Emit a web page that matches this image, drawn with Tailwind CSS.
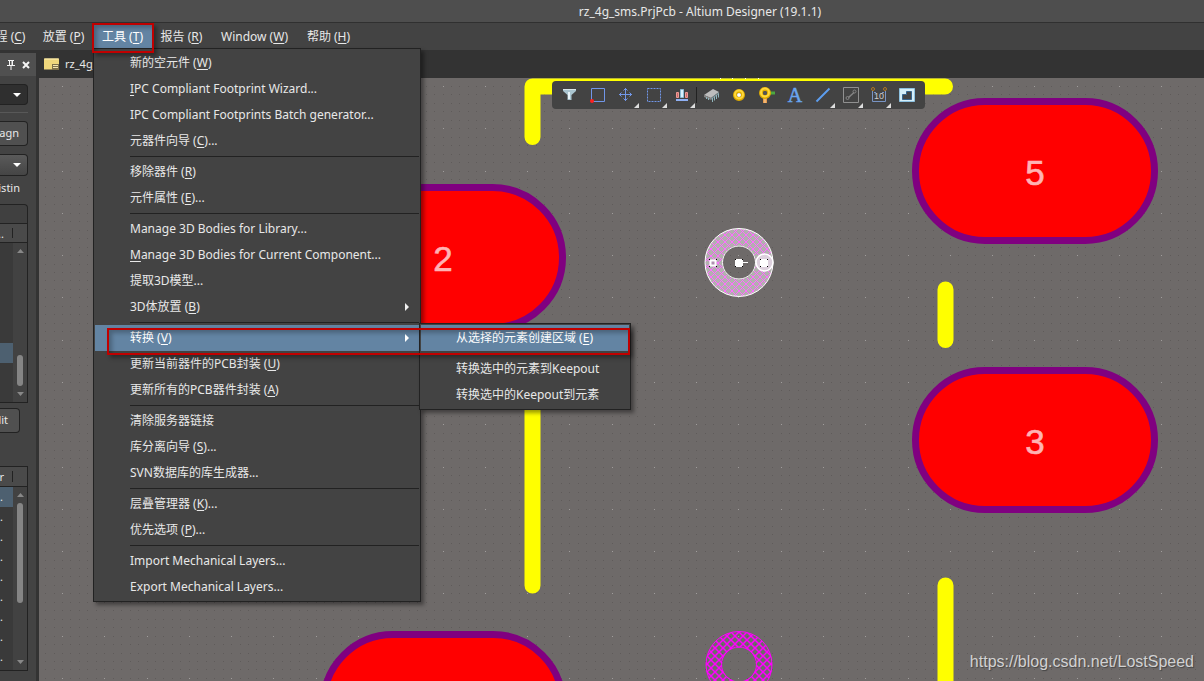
<!DOCTYPE html>
<html lang="zh-CN">
<head>
<meta charset="utf-8">
<title>rz_4g_sms.PrjPcb - Altium Designer (19.1.1)</title>
<script src="https://cdn.jsdelivr.net/npm/@tailwindcss/browser@4"></script>
</head>
<body class="relative flex h-screen flex-col overflow-hidden bg-[#333333] font-['Noto_Sans','Noto_Sans_CJK_SC',sans-serif] text-xs text-[#e8e8e8]">

<header class="h-[23px] shrink-0 border-b border-[#303030] bg-[#4e4e4e] pl-[196px] text-center leading-6">rz_4g_sms.PrjPcb - Altium Designer (19.1.1)</header>

<nav class="-ml-[25px] flex h-[27px] shrink-0 bg-[#434343] [&_u]:underline-offset-2">
  <button class="w-[59px] whitespace-nowrap">工程 (<u>C</u>)</button>
  <button class="w-[59px] whitespace-nowrap">放置 (<u>P</u>)</button>
  <div class="relative w-[59px]">
    <button class="h-[25px] w-full whitespace-nowrap bg-[#6384a3] pt-0.5 text-white">工具 (<u>T</u>)</button>
    <div class="pointer-events-none absolute -left-px top-0 z-30 h-[30px] w-[62px] border-2 border-[#c00000] shadow-[3px_3px_4px_rgba(0,0,0,0.35),inset_3px_3px_4px_rgba(0,0,0,0.25)]"></div>

    <div role="menu" class="absolute left-0 top-[25px] z-20 w-[328px] border border-[#222222] bg-[#434343] p-px shadow-[3px_3px_4px_rgba(0,0,0,0.4)] [&_button]:block [&_button]:h-[26px] [&_button]:w-full [&_button]:whitespace-nowrap [&_button]:pl-[35px] [&_button]:text-left [&_hr]:my-0.5 [&_hr]:ml-[35px] [&_hr]:border-[#222222]">
      <button role="menuitem">新的空元件 (<u>W</u>)</button>
      <button role="menuitem"><u>I</u>PC Compliant Footprint Wizard...</button>
      <button role="menuitem">IPC Compliant Footprints Batch generator...</button>
      <button role="menuitem">元器件向导 (<u>C</u>)...</button>
      <hr>
      <button role="menuitem">移除器件 (<u>R</u>)</button>
      <button role="menuitem">元件属性 (<u>E</u>)...</button>
      <hr>
      <button role="menuitem">Manage 3D Bodies for Library...</button>
      <button role="menuitem"><u>M</u>anage 3D Bodies for Current Component...</button>
      <button role="menuitem">提取3D模型...</button>
      <button role="menuitem" aria-haspopup="true"><span class="flex items-center justify-between pr-2.5"><span>3D体放置 (<u>B</u>)</span><svg class="h-2 w-1" viewBox="0 0 4 8"><path d="M0 0L4 4L0 8Z" fill="#f0f0f0"/></svg></span></button>
      <hr>
      <div class="relative">
        <button role="menuitem" aria-haspopup="true" aria-expanded="true" class="bg-[#6384a3] text-white"><span class="flex items-center justify-between pr-2.5"><span>转换 (<u>V</u>)</span><svg class="h-2 w-1" viewBox="0 0 4 8"><path d="M0 0L4 4L0 8Z" fill="#ffffff"/></svg></span></button>
        <div role="menu" class="absolute -top-0.5 left-[324px] w-[212px] border border-[#222222] bg-[#434343] p-px shadow-[3px_3px_4px_rgba(0,0,0,0.4)]">
          <button role="menuitem" class="bg-[#6384a3] text-white">从选择的元素创建区域 (<u>E</u>)</button>
          <hr>
          <button role="menuitem">转换选中的元素到Keepout</button>
          <button role="menuitem">转换选中的Keepout到元素</button>
        </div>
        <div class="pointer-events-none absolute left-3 top-[3px] h-[27px] w-[523px] border-2 border-[#c00000] shadow-[3px_3px_4px_rgba(0,0,0,0.35),inset_3px_3px_4px_rgba(0,0,0,0.25)]"></div>
      </div>
      <button role="menuitem">更新当前器件的PCB封装 (<u>U</u>)</button>
      <button role="menuitem">更新所有的PCB器件封装 (<u>A</u>)</button>
      <hr>
      <button role="menuitem">清除服务器链接</button>
      <button role="menuitem">库分离向导 (<u>S</u>)...</button>
      <button role="menuitem">SVN数据库的库生成器...</button>
      <hr>
      <button role="menuitem">层叠管理器 (<u>K</u>)...</button>
      <button role="menuitem">优先选项 (<u>P</u>)...</button>
      <hr>
      <button role="menuitem">Import Mechanical Layers...</button>
      <button role="menuitem">Export Mechanical Layers...</button>
    </div>
  </div>
  <button class="w-[59px] whitespace-nowrap">报告 (<u>R</u>)</button>
  <button class="w-[87px] whitespace-nowrap">Window (<u>W</u>)</button>
  <button class="w-[61px] whitespace-nowrap">帮助 (<u>H</u>)</button>
</nav>

<main class="flex min-h-0 flex-1">
  <aside class="mt-[3px] w-9 shrink-0 overflow-hidden bg-[#434343] text-[11px]">
    <div class="flex h-[23px] items-center justify-end gap-1.5 bg-[#505050] pr-1.5">
      <button aria-label="固定"><svg class="h-3 w-2.5" viewBox="0 0 10 12"><path d="M2 1.500H8M3.500 1V6.500M6.500 1V6.500M1 6.500H9M5 7V11" stroke="#f5f5f5" fill="none"/><path d="M5.500 1.500H7V6.500H5.500Z" fill="#f5f5f5"/></svg></button>
      <button aria-label="关闭"><svg class="h-2 w-2" viewBox="0 0 8 8"><path d="M1 1L7 7M7 1L1 7" stroke="#f5f5f5" stroke-width="2"/></svg></button>
    </div>
    <div class="pr-2">
      <button aria-label="筛选" class="mt-2 flex h-[21px] w-full items-center justify-end rounded-r border border-l-0 border-[#222222] bg-[#2f2f2f] pr-1.5"><svg class="h-1 w-2" viewBox="0 0 8 4"><path d="M0 0H8L4 4Z" fill="#ffffff"/></svg></button>
      <div class="mt-[7px] h-px bg-[#585858]"></div>
      <button class="mt-2 flex h-[25px] w-full items-center justify-end rounded-r border border-l-0 border-[#222222] bg-[#505050] pr-2">Magn</button>
      <button aria-label="模式" class="mt-2 flex h-[22px] w-full items-center justify-end rounded-r border border-l-0 border-[#222222] bg-linear-to-b from-[#5a5a5a] to-[#454545] pr-1.5"><svg class="h-1 w-2" viewBox="0 0 8 4"><path d="M0 0H8L4 4Z" fill="#ffffff"/></svg></button>
      <div class="mb-1 flex h-6 items-center justify-end pr-2">existin</div>
      <div class="h-[19px] rounded-tr border border-b-0 border-l-0 border-[#222222] bg-[#404040]"></div>
      <div class="flex h-5 border-y border-r border-[#222222] bg-[#4a4a4a]"><span class="my-1 flex w-[13px] justify-end border-r border-[#222222] pr-2 leading-3">...</span></div>
      <div class="flex h-[160px] border-b border-r border-[#222222] bg-[#3a3a3a]">
        <div class="w-[13px] pt-[100px]"><div class="h-5 bg-[#4d6070]"></div></div>
        <div class="flex flex-1 flex-col items-center bg-[#424242] py-1.5">
          <svg class="h-1 w-[7px]" viewBox="0 0 7 4"><path d="M0 4H7L3.500 0Z" fill="#888888"/></svg>
          <div class="mt-[102px] h-8 w-1.5 rounded-full bg-[#858585]"></div>
          <svg class="mt-1.5 h-1 w-[7px]" viewBox="0 0 7 4"><path d="M0 0H7L3.500 4Z" fill="#888888"/></svg>
        </div>
      </div>
      <button class="mt-[5px] flex h-[25px] w-5 items-center justify-end rounded-r border border-l-0 border-[#222222] bg-[#505050] pr-[11px]">Edit</button>
      <div class="mt-[33px] flex h-[21px] border-y border-r border-[#222222] bg-[#4a4a4a]"><span class="my-1 flex w-[13px] justify-end border-r border-[#222222] pr-2 leading-3">er</span></div>
      <div class="flex h-[184px] border-b border-r border-[#222222] bg-[#3a3a3a]">
        <div class="flex w-[13px] flex-col overflow-hidden [&>span]:flex [&>span]:h-5 [&>span]:shrink-0 [&>span]:items-center [&>span]:justify-end [&>span]:pr-2.5">
          <span class="bg-[#4d6070]">...</span><span>...</span><span>...</span><span>...</span><span>...</span><span>...</span><span>...</span><span>...</span><span>...</span>
        </div>
        <div class="flex flex-1 flex-col items-center bg-[#424242] py-1.5">
          <svg class="h-1 w-[7px]" viewBox="0 0 7 4"><path d="M0 4H7L3.500 0Z" fill="#888888"/></svg>
          <div class="mt-1.5 h-[100px] w-1.5 rounded-full bg-[#858585]"></div>
          <svg class="mt-auto h-1 w-[7px]" viewBox="0 0 7 4"><path d="M0 0H7L3.500 4Z" fill="#888888"/></svg>
        </div>
      </div>
    </div>
  </aside>

  <section class="ml-[3px] flex min-w-0 flex-1 flex-col">
    <div class="flex h-7 shrink-0 items-center pl-[5px]">
      <button class="flex items-center gap-1.5 text-[11px]">
        <svg class="h-3 w-[15px]" viewBox="0 0 15 12"><path d="M0 0.500H15V11.500H0Z" fill="#efd77c"/><path d="M0.500 1H14.500" stroke="#fff0b5"/><path d="M8 6H15V12H8Z" fill="#7d704a"/><path d="M9 7.500H14M9 9.500H14" stroke="#f5e6ae"/></svg>
        rz_4g_sms.PcbLib
      </button>
    </div>
    <div class="relative min-h-0 flex-1 overflow-hidden bg-[#6e6a69]">
      <svg class="absolute left-0 top-0" width="1165" height="603" viewBox="39 78 1165 603" font-family="Liberation Sans, sans-serif">
        <defs>
          <pattern id="hatchSel" x="739" y="263" width="7" height="7" patternUnits="userSpaceOnUse"><rect width="7" height="7" fill="#b3b0b0"/><path d="M-1 8L8 -1M-1 -1L8 8" stroke="#ff6cff" stroke-width="1"/></pattern>
          <pattern id="hatch" x="739" y="664" width="8" height="8" patternUnits="userSpaceOnUse"><path d="M-1 9L9 -1M-1 -1L9 9" stroke="#ff00ff" stroke-width="1.500"/></pattern>
        </defs>
        <path id="gridMinor" fill="#5f5b5a"/>
        <path id="gridMajor" fill="#a09d9c"/>
        <g stroke="#ffff00" stroke-width="16" stroke-linecap="round" stroke-linejoin="round" fill="none">
          <path d="M532.500 137V86.500H945"/>
          <path d="M532.500 380V585.500M945.500 289.500V340M945.500 585.500V700"/>
        </g>
        <g fill="#ff0000" stroke="#800080" stroke-width="7">
          <rect x="915.500" y="101.500" width="239" height="139" rx="69.500"/>
          <rect x="915.500" y="370.500" width="239" height="139" rx="69.500"/>
          <rect x="323.500" y="187.500" width="239" height="140" rx="70"/>
          <rect x="323.500" y="634.500" width="239" height="139" rx="69.500"/>
        </g>
        <g fill="#ffb3b3" stroke="#ffb3b3" stroke-width=".6" font-size="35" text-anchor="middle">
          <text x="1035" y="185">5</text><text x="1035" y="454">3</text><text x="443" y="271">2</text>
        </g>
        <circle cx="739" cy="262.500" r="25.500" fill="none" stroke="url(#hatchSel)" stroke-width="17"/>
        <circle cx="739" cy="262.500" r="34" fill="none" stroke="#fff"/><circle cx="739" cy="262.500" r="16.500" fill="none" stroke="#fff"/>
        <circle cx="764.500" cy="262.500" r="8.500" fill="#ddd0dd" stroke="#fff" stroke-width="1.500"/>
        <path d="M739 262.500H748" stroke="#fff"/>
        <g fill="#fff"><rect x="735" y="259" width="8" height="8" rx="1"/><rect x="760" y="259" width="8" height="8" rx="1"/></g>
        <rect x="710.500" y="260.500" width="5" height="5" fill="#b090b0" stroke="#fff" stroke-width="2"/>
        <path d="M735 259h1v1h-1zM742 259h1v1h-1zM735 266h1v1h-1zM742 266h1v1h-1zM760 259h1v1h-1zM767 259h1v1h-1zM760 266h1v1h-1zM767 266h1v1h-1zM709 259h1v1h-1zM716 259h1v1h-1zM709 266h1v1h-1zM716 266h1v1h-1z" fill="#000"/>
        <circle cx="739" cy="664.500" r="25" fill="none" stroke="url(#hatch)" stroke-width="16"/>
        <circle cx="739" cy="664.500" r="33" fill="none" stroke="#ff00ff"/><circle cx="739" cy="664.500" r="17.500" fill="none" stroke="#ff00ff"/>
        <path d="M720 79l2 -2M731 77l2 2M745 79l2 -2M757 77l2 2" stroke="#fff"/>
      </svg>

      <div role="toolbar" class="absolute left-[513px] top-[3px] flex h-7 w-[373px] rounded-sm bg-[#434343] pl-1 [&_button]:h-7 [&_button]:w-7 [&_svg]:h-7 [&_svg]:w-7">
        <button aria-label="过滤器"><svg viewBox="0 0 28 28"><path d="M7 8H20V10L15.500 14V19H11.500V14L7 10Z" fill="#a9c4cf"/><path d="M7 8.500H20" stroke="#d9e5ea"/><path d="M13 11V18" stroke="#e9f5fa" stroke-width="2"/></svg></button>
        <button aria-label="捕捉"><svg viewBox="0 0 28 28"><path d="M7.500 7.500H20.500V20.500H7.500Z" fill="none" stroke="#7196e8"/><circle cx="8" cy="20" r="2" fill="#ff2020"/></svg></button>
        <button aria-label="移动"><svg viewBox="0 0 28 28"><path d="M7 13.500H20M13.500 7V20M11.500 9.500L13.500 7.500L15.500 9.500M11.500 17.500L13.500 19.500L15.500 17.500M9.500 11.500L7.500 13.500L9.500 15.500M17.500 11.500L19.500 13.500L17.500 15.500" fill="none" stroke="#7196e8"/><path d="M27 22V27H22Z" fill="#ddd"/></svg></button>
        <button aria-label="选择"><svg viewBox="0 0 28 28"><path d="M7.500 7.500H20.500V20.500H7.500Z" fill="none" stroke="#7196e8" stroke-dasharray="2 1"/><path d="M27 22V27H22Z" fill="#ddd"/></svg></button>
        <button aria-label="对齐"><svg viewBox="0 0 28 28"><path d="M8.500 11.500H10.500V16.500H8.500ZM17.500 11.500H19.500V16.500H17.500Z" fill="#c86a6a" stroke="#f09a94"/><path d="M12.500 8.500H15.500V16.500H12.500Z" fill="#d8f1fc" stroke="#8bbdd6"/><path d="M8 19H20" stroke="#8fb0f4" stroke-width="2"/><path d="M27 22V27H22Z" fill="#ddd"/></svg></button>
        <button aria-label="器件"><svg viewBox="0 0 28 28"><path d="M0.500 6V22" stroke="#222222"/><path d="M8 14L17 8L23 11L15 17Z" fill="#bdbdbd"/><path d="M8 14L15 17V19L8 16Z" fill="#858585"/><path d="M15 17L23 11V13L15 19Z" fill="#75868b"/><path d="M16.500 17V21M18.500 15.500V19.500M20.500 14V18M22.500 12.500V16.500M10.500 16V18M12.500 17V19" stroke="#91b5bb"/></svg></button>
        <button aria-label="焊盘"><svg viewBox="0 0 28 28"><circle cx="15" cy="14" r="4" fill="none" stroke="#e0ad00" stroke-width="4"/><circle cx="15" cy="13.500" r="4" fill="none" stroke="#ffd83a" stroke-width="2"/><circle cx="15" cy="14" r="2" fill="#fff"/></svg></button>
        <button aria-label="过孔"><svg viewBox="0 0 28 28"><path d="M17 12H23" stroke="#4da83f" stroke-width="3"/><path d="M13 16V22" stroke="#e69a4c" stroke-width="4"/><path d="M13 16V22" stroke="#ffd29a"/><circle cx="13" cy="12" r="4" fill="none" stroke="#e0ad00" stroke-width="4"/><circle cx="13" cy="11.500" r="4" fill="none" stroke="#ffd83a" stroke-width="2"/><circle cx="13" cy="12" r="2" fill="#555"/></svg></button>
        <button class="pl-0.5 font-['Liberation_Serif',serif] text-xl leading-7 text-[#69a6ef] [-webkit-text-stroke:0.5px]">A</button>
        <button aria-label="线条"><svg viewBox="0 0 28 28"><path d="M8.500 20.500L21.500 7.500" stroke="#5d9eef" stroke-width="2"/><path d="M27 22V27H22Z" fill="#ddd"/></svg></button>
        <button aria-label="测量"><svg viewBox="0 0 28 28"><path d="M7.500 6.500H22.500V21.500H7.500Z" fill="none" stroke="#909090"/><path d="M12.500 16.500L18 11.500" stroke="#858585" stroke-width="1.500"/><circle cx="11.500" cy="17" r="1.500" fill="none" stroke="#858585"/><circle cx="18.500" cy="10.500" r="1.500" fill="none" stroke="#858585"/><path d="M27 22V27H22Z" fill="#ddd"/></svg></button>
        <button aria-label="尺寸"><svg viewBox="0 0 28 28"><path d="M8.500 10V20.500H21.500V10M10 11.500H12M18 11.500H20" fill="none" stroke="#7894c4"/><circle cx="9" cy="8" r="1.500" fill="none" stroke="#b07820"/><circle cx="21" cy="8" r="1.500" fill="none" stroke="#b07820"/><text x="15" y="18" font-size="9" text-anchor="middle" fill="#ccc" font-family="Liberation Sans">10</text><path d="M27 22V27H22Z" fill="#ddd"/></svg></button>
        <button aria-label="区域"><svg viewBox="0 0 28 28"><path d="M7.500 7.500H22.500V20.500H7.500Z" fill="#d5eef8" stroke="#8cc0df"/><path d="M14.500 10.500H19.500V18.500H10.500V13.500H14.500Z" fill="#444" stroke="#39658c"/></svg></button>
      </div>

      <a href="https://blog.csdn.net/LostSpeed" class="absolute bottom-[7px] right-2.5 font-['Liberation_Sans',sans-serif] text-base leading-6 text-[#d2d2d2] [text-shadow:1px_1px_1px_#444]">https://blog.csdn.net/LostSpeed</a>
    </div>
  </section>
</main>

<script>
  // Snap grid: one dot per step, every fifth step is a brighter major dot
  const step = 8.456;
  let minor = '', major = '';
  for (let i = -2; i < 136; i++) {
    for (let j = 0; j < 72; j++) {
      const dot = 'M' + Math.round(62 + i * step) + ' ' + Math.round(86 + j * step) + 'h1v1h-1z';
      if (i % 5 === 0 && j % 5 === 0) major += dot; else minor += dot;
    }
  }
  document.getElementById('gridMinor').setAttribute('d', minor);
  document.getElementById('gridMajor').setAttribute('d', major);
</script>
</body>
</html>
